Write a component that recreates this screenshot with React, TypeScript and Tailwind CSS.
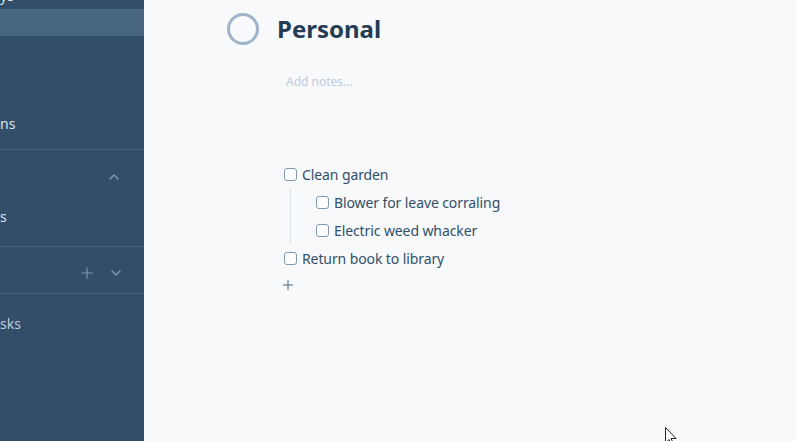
import { Plus, ChevronUp, ChevronDown } from 'lucide-react'

const font = { fontFamily: '"Noto Sans", "Open Sans", sans-serif' }

type Item = { label: string; children?: string[] }

const items: Item[] = [
  { label: 'Clean garden', children: ['Blower for leave corraling', 'Electric weed whacker'] },
  { label: 'Return book to library' },
]

function Check({ label }: { label: string }) {
  return (
    <div className="flex h-[28px] items-center gap-[5px]">
      <span className="h-[13px] w-[13px] rounded-[3px] border border-[#829ab1] bg-white" />
      <span className="text-[14px] tracking-[-0.1px] text-[#334e68]">{label}</span>
    </div>
  )
}

function Sidebar() {
  return (
    <aside className="flex h-full w-[144px] shrink-0 flex-col overflow-hidden bg-[#334e68] text-[14px] text-[#d9e2ec]">
      <div className="h-[9px] overflow-hidden">
        <div className="-mt-[14px] leading-[20px]">ys</div>
      </div>
      <div className="h-[27px] bg-[#486581]" />
      <div className="flex h-[113px] items-end pb-[15px] leading-[20px]">ns</div>
      <div className="h-px bg-[#486581]" />
      <div className="flex h-[54px] items-center justify-end pr-[22px] text-[#829ab1]">
        <ChevronUp size={16} strokeWidth={2} />
      </div>
      <div className="h-[42px] pt-[3px] leading-[20px]">s</div>
      <div className="h-px bg-[#486581]" />
      <div className="flex h-[46px] items-center justify-end gap-[12px] pr-[20px] pt-[6px] text-[#829ab1]">
        <Plus size={18} strokeWidth={1.5} />
        <ChevronDown size={16} strokeWidth={2} />
      </div>
      <div className="h-px bg-[#486581]" />
      <div className="pt-[20px] leading-[20px] text-[#bcccdc]">sks</div>
    </aside>
  )
}

export default function App() {
  return (
    <div className="relative flex h-[441px] w-[796px] overflow-hidden bg-[#f7f9fb]" style={font}>
      <Sidebar />
      <main className="flex-1 pl-[83px] pt-[13px]">
        <div className="flex items-center gap-[18px]">
          <span className="h-[32px] w-[32px] rounded-full border-[3px] border-[#9fb3c8]" />
          <h1 className="text-[24px] font-bold leading-[32px] text-[#243b53]">Personal</h1>
        </div>
        <div className="ml-[59px] mt-[29px] text-[12px] leading-[16px] text-[#bcccdc]">Add notes...</div>
        <div className="ml-[57px] mt-[70px]">
          {items.map(item => (
            <div key={item.label}>
              <Check label={item.label} />
              {item.children && (
                <div className="ml-[6px] border-l border-[#d9e2ec] pl-[25px]">
                  {item.children.map(c => (
                    <Check key={c} label={c} />
                  ))}
                </div>
              )}
            </div>
          ))}
          <div className="-ml-[4px] flex h-[26px] items-center text-[#486581]">
            <Plus size={16} strokeWidth={1.5} />
          </div>
        </div>
      </main>
      <svg className="absolute left-[665px] top-[427px]" width="12" height="18" viewBox="0 0 12 18">
        <path d="M0.5 0.5 L0.5 16 L4 12.5 L6.5 17.5 L8.5 16.5 L6 11.5 L11 11.5 Z" fill="#fff" stroke="#222" strokeWidth="1" />
      </svg>
    </div>
  )
}
